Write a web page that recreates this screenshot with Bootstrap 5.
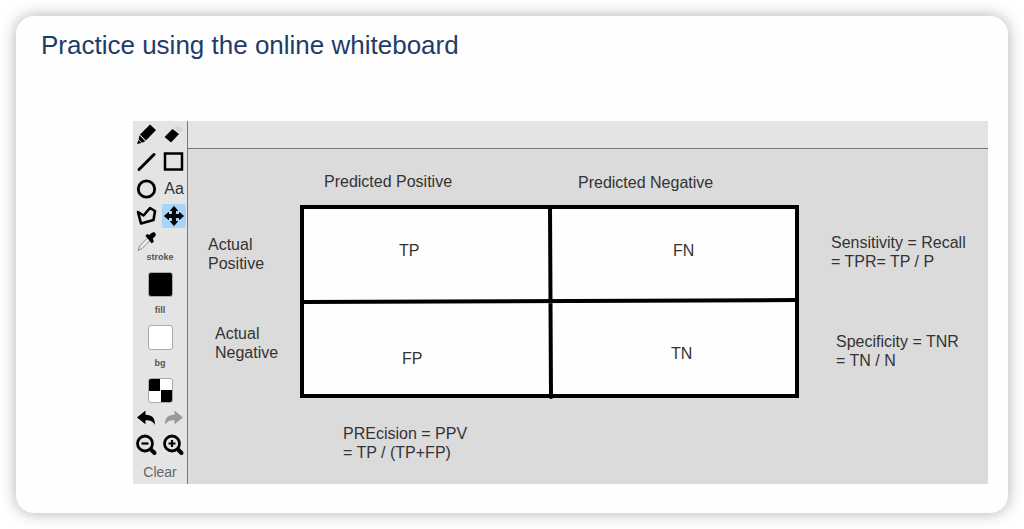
<!DOCTYPE html>
<html lang="en">
<head>
<meta charset="utf-8">
<meta name="viewport" content="width=device-width, initial-scale=1">
<title>Practice using the online whiteboard</title>
<link href="https://cdn.jsdelivr.net/npm/bootstrap@5.3.0/dist/css/bootstrap.min.css" rel="stylesheet">
<style>
  body { font-family: "Liberation Sans", Arial, sans-serif; background: #fff; }
  .lesson { border-radius: 18px; background: #fefefe; box-shadow: 0 0 16px rgba(0, 0, 0, .32); padding: 13px 20px 29px 25px; }
  .lesson-title { font-size: 26px; line-height: 32px; color: #1f3c68; margin-bottom: 60px; }
  .board { margin-left: 92px; background: #dbdbdb; }
  .tools { width: 55px; padding-top: 2px; background: #e4e4e4; border-right: 1px solid #777; }
  .tool-grid { display: grid; grid-template-columns: 24px 24px; gap: 3px; margin-left: 2px; align-self: flex-start; }
  .tool { width: 24px; height: 24px; padding: 0; border: 0; border-radius: 2px; background: transparent; color: #000; display: block; }
  .tool svg { display: block; }
  .tool.picked { background: #a8d4fa; }
  .tool.short { height: 20px; }
  .tool-text { font-size: 16px; line-height: 24px; color: #333; }
  .tool:disabled { color: #999; }
  .swatch-label { font-size: 9px; line-height: 12px; margin-bottom: 9px; font-weight: 700; color: #555; }
  .swatch { width: 25px; height: 25px; padding: 0; border: 1px solid #aaa; border-radius: 3px; margin-bottom: 7px; }
  .swatch-black { background: #000; }
  .swatch-white { background: #fff; }
  .swatch-check { background: conic-gradient(#fff 25%, #000 0 50%, #fff 0 75%, #000 0); margin-bottom: 3px; }
  .clear-btn { border: 0; background: transparent; padding: 0; margin-top: 3px; font-size: 14px; line-height: 24px; color: #666; }
  .options-bar { height: 28px; background: #e4e4e4; border-bottom: 1px solid #777; }
  .drawing { min-height: 335px; }
  .drawing svg, .note { position: absolute; }
  .note { font-size: 16px; line-height: 19px; color: #333; white-space: nowrap; }
  /* Items dropped on the free canvas */
  .matrix { left: 112px; top: 56px; }
  .n-pp { left: 136px; top: 23px; }
  .n-pn { left: 390px; top: 24px; }
  .n-ap { left: 20px; top: 86px; }
  .n-an { left: 27px; top: 175px; }
  .n-tp { left: 211px; top: 92px; }
  .n-fn { left: 485px; top: 92px; }
  .n-fp { left: 214px; top: 200px; }
  .n-tn { left: 483px; top: 195px; }
  .n-sens { left: 643px; top: 84px; }
  .n-spec { left: 648px; top: 183px; }
  .n-prec { left: 155px; top: 275px; }
</style>
</head>
<body>
<main class="lesson m-3">
  <h1 class="lesson-title fw-normal">Practice using the online whiteboard</h1>
  <section class="board d-flex" aria-label="Whiteboard">
    <div class="tools d-flex flex-column align-items-center flex-shrink-0">
      <div class="tool-grid">
        <button class="tool" type="button" aria-label="Pencil"><svg width="24" height="24"><path d="M15 1.500l6 5.500-10 10.500-6-6zM4.300 12.300l6 6-3.300 1.500-3.200-3.200zM3.400 17l3 3-4.400 1z"/></svg></button>
        <button class="tool" type="button" aria-label="Eraser"><svg width="24" height="24"><path fill="#d6d6d6" d="M12 5l3-3 6 4-3 4z"/><path d="M10.500 6l6.500 5-8 8.500-6.500-5.500z"/></svg></button>
        <button class="tool" type="button" aria-label="Line"><svg width="24" height="24"><path stroke="#000" stroke-width="3" stroke-linecap="round" d="M4 19.500L19 4.500"/></svg></button>
        <button class="tool" type="button" aria-label="Rectangle"><svg width="24" height="24"><rect x="3" y="3.500" width="17" height="16" fill="none" stroke="#000" stroke-width="2.500"/></svg></button>
        <button class="tool" type="button" aria-label="Ellipse"><svg width="24" height="24"><circle cx="11.500" cy="12" r="8.200" fill="none" stroke="#000" stroke-width="2.800"/></svg></button>
        <button class="tool tool-text" type="button" aria-label="Text">Aa</button>
        <button class="tool" type="button" aria-label="Polygon"><svg width="24" height="24"><path fill="none" stroke="#000" stroke-width="2.600" stroke-linejoin="round" d="M3 8l5.500 3.500 6.500-7.500 5 3-1.500 9-12.500 3.500z"/></svg></button>
        <button class="tool picked" type="button" aria-label="Move" aria-pressed="true"><svg width="24" height="24"><path stroke="#000" stroke-linejoin="round" d="M12 2.500l3.500 4h-2v4h4v-2l4 3.500-4 3.500v-2h-4v4h2l-3.500 4-3.500-4h2v-4h-4v2l-4-3.500 4-3.500v2h4v-4h-2z"/></svg></button>
        <button class="tool short" type="button" aria-label="Eyedropper"><svg width="24" height="20"><path fill="#eee" stroke="#888" d="M3 19.500l2-5 8-8 2.500 2.500-8.500 8.500z"/><path d="M10.500 5l1.500-2 2.500 1c2-3 5.300-3.500 6-1.500 1 2-.700 3.500-2.700 5l1 3-2 2z"/></svg></button>
      </div>
      <div class="swatch-label" id="lbl-stroke">stroke</div>
      <button class="swatch swatch-black" type="button" aria-labelledby="lbl-stroke"></button>
      <div class="swatch-label" id="lbl-fill">fill</div>
      <button class="swatch swatch-white" type="button" aria-labelledby="lbl-fill"></button>
      <div class="swatch-label" id="lbl-bg">bg</div>
      <button class="swatch swatch-check" type="button" aria-labelledby="lbl-bg"></button>
      <div class="tool-grid">
        <button class="tool" type="button" aria-label="Undo"><svg width="24" height="24"><path d="M2 11.500l8.500-7v4.200c7 0 9.500 3.300 9.500 10.300-2-3.500-4.500-4.700-9.500-4.700v4z"/></svg></button>
        <button class="tool" type="button" aria-label="Redo" disabled><svg width="24" height="24" fill="currentColor"><path d="M21 11.500l-8.500-7v4.200c-7 0-9.500 3.300-9.500 10.300 2-3.500 4.500-4.700 9.500-4.700v4z"/></svg></button>
        <button class="tool" type="button" aria-label="Zoom out"><svg width="24" height="24" fill="none" stroke="#000"><circle cx="10" cy="10.500" r="7.500" stroke-width="2.800"/><path stroke-width="2.200" d="M6.500 10.500h7"/><path stroke-width="4" stroke-linecap="round" d="M16 16.500l3.500 3.500"/></svg></button>
        <button class="tool" type="button" aria-label="Zoom in"><svg width="24" height="24" fill="none" stroke="#000"><circle cx="10" cy="10.500" r="7.500" stroke-width="2.800"/><path stroke-width="2.200" d="M6.500 10.500h7M10 7v7"/><path stroke-width="4" stroke-linecap="round" d="M16 16.500l3.500 3.500"/></svg></button>
      </div>
      <button class="clear-btn" type="button">Clear</button>
    </div>
    <div class="flex-grow-1">
      <div class="options-bar"></div>
      <div class="drawing position-relative">
        <svg class="matrix" width="500" height="195" aria-hidden="true"><rect x="2" y="2" width="495" height="189" fill="#fefefe" stroke="#000" stroke-width="4"/><path stroke="#000" stroke-width="4" stroke-linecap="round" d="M2 97L496 95M250 2L251 192"/></svg>
        <div class="note n-pp">Predicted Positive</div>
        <div class="note n-pn">Predicted Negative</div>
        <div class="note n-ap">Actual<br>Positive</div>
        <div class="note n-an">Actual<br>Negative</div>
        <div class="note n-tp">TP</div>
        <div class="note n-fn">FN</div>
        <div class="note n-fp">FP</div>
        <div class="note n-tn">TN</div>
        <div class="note n-sens">Sensitivity = Recall<br>= TPR= TP / P</div>
        <div class="note n-spec">Specificity = TNR<br>= TN / N</div>
        <div class="note n-prec">PREcision = PPV<br>= TP / (TP+FP)</div>
      </div>
    </div>
  </section>
</main>
<script src="https://cdn.jsdelivr.net/npm/bootstrap@5.3.0/dist/js/bootstrap.bundle.min.js"></script>
</body>
</html>
